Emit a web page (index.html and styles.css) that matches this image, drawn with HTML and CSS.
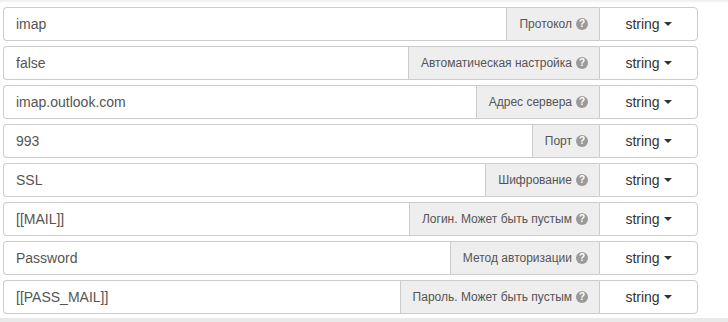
FILE: index.html
```html
<!DOCTYPE html>
<html lang="ru">
<head>
    <meta charset="UTF-8">
    <meta name="viewport" content="width=device-width, initial-scale=1.0">
    <title>Параметры</title>
    <link rel="stylesheet" href="styles.css">
</head>
<body>

<div class="top-shade"></div>

<div class="params">
    <!-- one row per parameter: value, name, type -->
    <div class="param-row">
        <input class="param-value" type="text" value="imap">
        <span class="param-label">Протокол <i class="help">?</i></span>
        <button class="param-type">string <span class="caret"></span></button>
    </div>
    <div class="param-row">
        <input class="param-value" type="text" value="false">
        <span class="param-label">Автоматическая настройка <i class="help">?</i></span>
        <button class="param-type">string <span class="caret"></span></button>
    </div>
    <div class="param-row">
        <input class="param-value" type="text" value="imap.outlook.com">
        <span class="param-label">Адрес сервера <i class="help">?</i></span>
        <button class="param-type">string <span class="caret"></span></button>
    </div>
    <div class="param-row">
        <input class="param-value" type="text" value="993">
        <span class="param-label">Порт <i class="help">?</i></span>
        <button class="param-type">string <span class="caret"></span></button>
    </div>
    <div class="param-row">
        <input class="param-value" type="text" value="SSL">
        <span class="param-label">Шифрование <i class="help">?</i></span>
        <button class="param-type">string <span class="caret"></span></button>
    </div>
    <div class="param-row">
        <input class="param-value" type="text" value="[[MAIL]]">
        <span class="param-label">Логин. Может быть пустым <i class="help">?</i></span>
        <button class="param-type">string <span class="caret"></span></button>
    </div>
    <div class="param-row">
        <input class="param-value" type="text" value="Password">
        <span class="param-label">Метод авторизации <i class="help">?</i></span>
        <button class="param-type">string <span class="caret"></span></button>
    </div>
    <div class="param-row">
        <input class="param-value" type="text" value="[[PASS_MAIL]]">
        <span class="param-label">Пароль. Может быть пустым <i class="help">?</i></span>
        <button class="param-type">string <span class="caret"></span></button>
    </div>
</div>

<div class="bottom-bar"></div>

</body>
</html>
```

FILE: styles.css
```css
/* Parameter list */
body {
    font-family: "Liberation Sans", Arial, sans-serif;
    margin: 0;
    padding: 0;
    background: #ffffff;
    color: #333;
    height: 322px;
    display: flex;
    flex-direction: column;
    overflow: hidden;
}
.top-shade {
    height: 3px;
    background: linear-gradient(#ececec, #ffffff);
}
.params {
    display: flex;
    flex-direction: column;
    gap: 5px;
    padding: 4px 30px 0 3px;
    flex: 1;
}
.param-row {
    display: flex;
    height: 34px;
}
.param-value {
    flex: 1;
    min-width: 0;
    height: 34px;
    box-sizing: border-box;
    border: 1px solid #ccc;
    border-right: none;
    border-radius: 4px 0 0 4px;
    padding: 0 12px;
    font-family: inherit;
    font-size: 14px;
    color: #555;
    background: #fff;
    outline: none;
}
.param-label {
    display: flex;
    align-items: center;
    gap: 4px;
    padding: 0 11px 0 12px;
    background: #eee;
    border: 1px solid #ccc;
    border-right: none;
    font-size: 12px;
    color: #555;
    white-space: nowrap;
}
.help {
    display: inline-flex;
    align-items: center;
    justify-content: center;
    width: 12px;
    height: 12px;
    border-radius: 50%;
    background: #9a9a9a;
    color: #fff;
    font-style: normal;
    font-weight: bold;
    font-size: 10px;
    line-height: 1;
}
.param-type {
    width: 99px;
    height: 34px;
    box-sizing: border-box;
    border: 1px solid #ccc;
    border-radius: 0 4px 4px 0;
    background: #fff;
    font-family: inherit;
    font-size: 14px;
    color: #333;
    display: flex;
    align-items: center;
    justify-content: center;
    gap: 4px;
    padding: 0;
}
.caret {
    width: 0;
    height: 0;
    border-top: 4px solid #333;
    border-left: 4px solid transparent;
    border-right: 4px solid transparent;
}
.bottom-bar {
    height: 4px;
    background: #e9e9e9;
}
```
